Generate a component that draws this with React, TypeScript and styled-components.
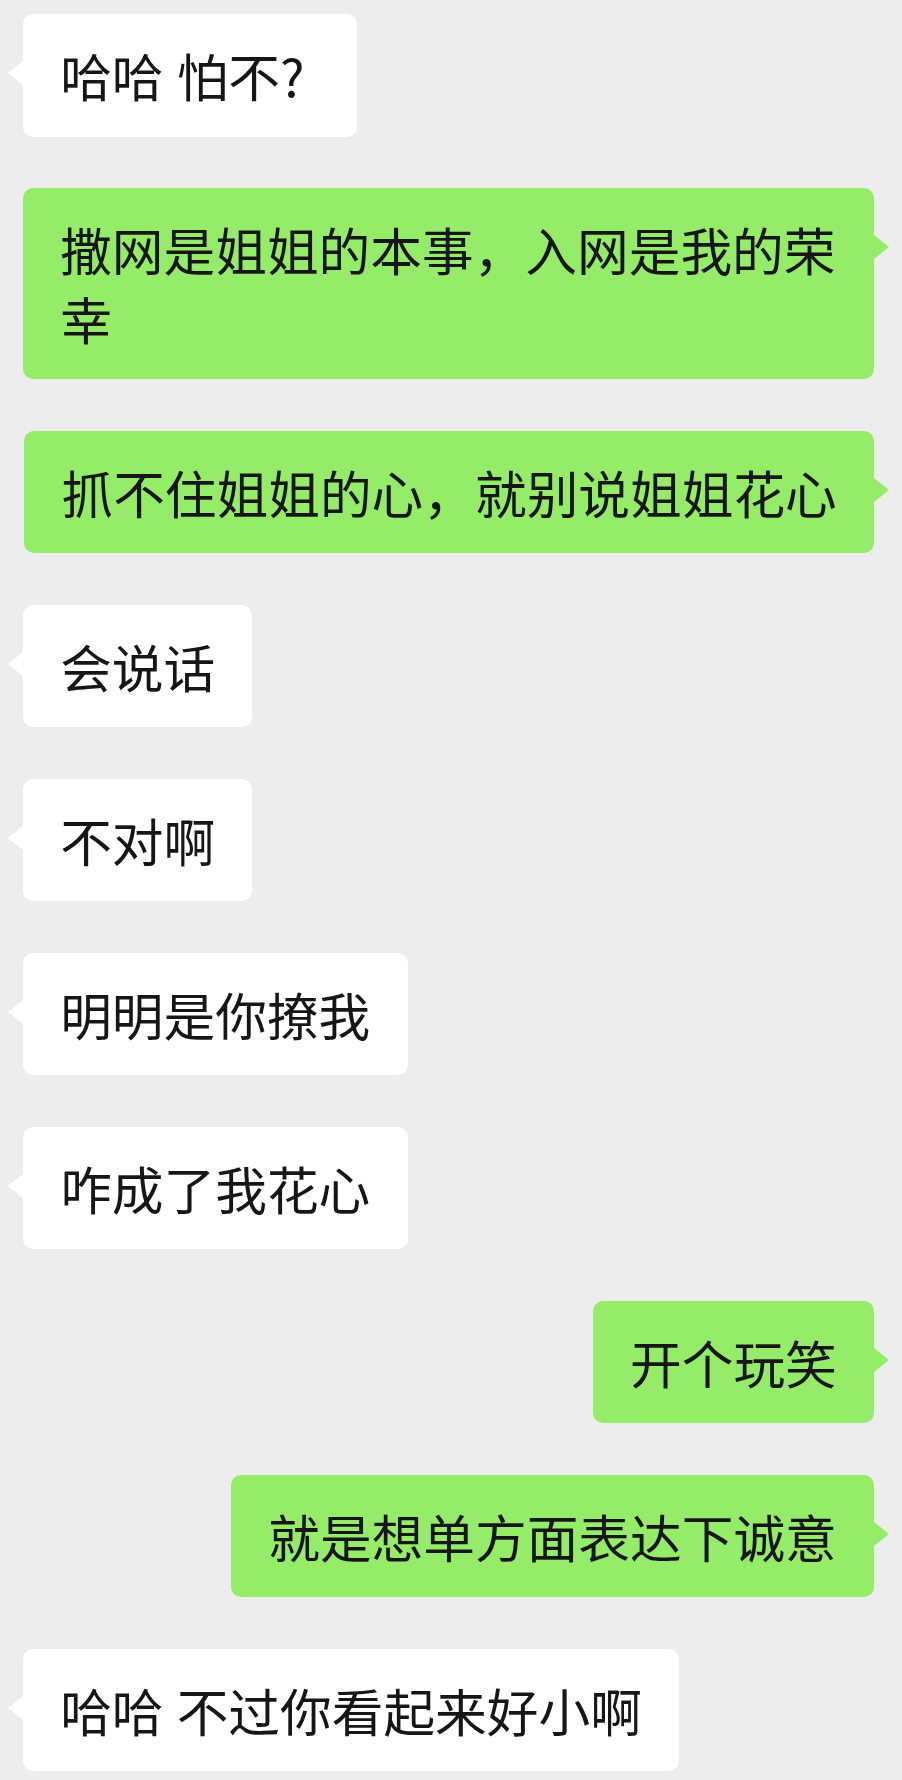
import React from 'react';
import styled, { createGlobalStyle } from 'styled-components';

const GlobalStyle = createGlobalStyle`
  html, body {
    margin: 0;
    padding: 0;
    background: #ededed;
  }
  body {
    font-family: "Noto Sans CJK SC", "Noto Sans", sans-serif;
  }
`;

const ChatList = styled.div`
  display: flex;
  flex-direction: column;
  gap: 51.5px;
  padding: 14px 28px 10px 23px;
  min-height: 1780px;
  box-sizing: border-box;
  background: #ededed;
`;

const Row = styled.div<{ $mine: boolean }>`
  display: flex;
  justify-content: ${props => (props.$mine ? 'flex-end' : 'flex-start')};
`;

const Bubble = styled.div<{ $mine: boolean }>`
  position: relative;
  max-width: 100%;
  box-sizing: border-box;
  padding: 27px 37.2px;
  border-radius: 10px;
  background: ${props => (props.$mine ? '#95ec69' : '#ffffff')};
  color: #161616;
  font-size: 51.7px;
  line-height: 68.5px;
  word-spacing: 1.5px;
  word-break: break-all;

  &::before {
    content: '';
    position: absolute;
    top: 47px;
    width: 0;
    height: 0;
    border-top: 12.5px solid transparent;
    border-bottom: 12.5px solid transparent;
    ${props =>
      props.$mine
        ? `right: -15px; border-left: 15px solid #95ec69;`
        : `left: -15px; border-right: 15px solid #ffffff;`}
  }
`;

const Question = styled.span`
  padding-right: 15px;
`;

type Message = { mine: boolean; text: React.ReactNode };

const messages: Message[] = [
  { mine: false, text: <>哈哈 怕不<Question>?</Question></> },
  { mine: true, text: '撒网是姐姐的本事，入网是我的荣幸' },
  { mine: true, text: '抓不住姐姐的心，就别说姐姐花心' },
  { mine: false, text: '会说话' },
  { mine: false, text: '不对啊' },
  { mine: false, text: '明明是你撩我' },
  { mine: false, text: '咋成了我花心' },
  { mine: true, text: '开个玩笑' },
  { mine: true, text: '就是想单方面表达下诚意' },
  { mine: false, text: '哈哈 不过你看起来好小啊' },
];

export default function App() {
  return (
    <>
      <GlobalStyle />
      <ChatList>
        {messages.map((m, i) => (
          <Row key={i} $mine={m.mine}>
            <Bubble $mine={m.mine}>{m.text}</Bubble>
          </Row>
        ))}
      </ChatList>
    </>
  );
}
